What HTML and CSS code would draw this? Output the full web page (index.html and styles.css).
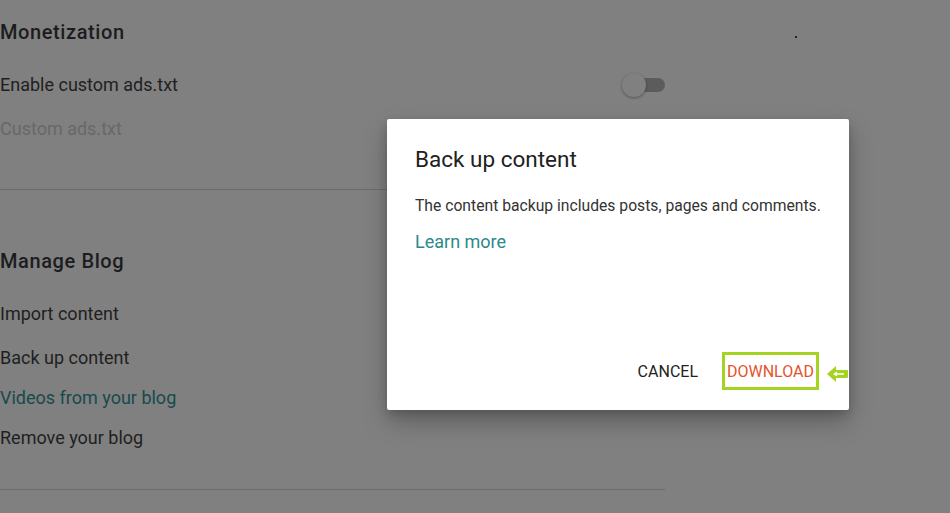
FILE: index.html
```html
<!DOCTYPE html>
<html lang="en">
<head>
    <meta charset="UTF-8">
    <meta name="viewport" content="width=device-width, initial-scale=1.0">
    <title>Settings - Back up content</title>
    <link rel="stylesheet" href="styles.css">
</head>
<body>
    <div class="settings">
        <section class="section section-monetization">
            <h2 class="section-title">Monetization</h2>
            <div class="row">
                <span>Enable custom ads.txt</span>
                <span class="toggle"><span class="toggle-knob"></span></span>
            </div>
            <div class="row row-disabled">Custom ads.txt</div>
        </section>

        <section class="section section-manage">
            <h2 class="section-title">Manage Blog</h2>
            <div class="row row-first">Import content</div>
            <div class="row row-tight">Back up content</div>
            <div class="row row-tight row-link">Videos from your blog</div>
            <div class="row row-tight">Remove your blog</div>
        </section>
    </div>

    <span class="stray-dot"></span>

    <!-- dialog on top of the dimmed settings page -->
    <div class="dialog">
        <h3 class="dialog-title">Back up content</h3>
        <p class="dialog-text">The content backup includes posts, pages and comments.</p>
        <a href="#" class="dialog-link">Learn more</a>
        <div class="dialog-actions">
            <button class="btn btn-cancel">Cancel</button>
            <button class="btn btn-download">Download</button>
            <svg class="pointer" width="24" height="18" viewBox="0 0 24 18">
                <path d="M2 9 L11 1 L11 5 L22 5 Q23 5 23 6 L23 12 Q23 13 22 13 L11 13 L11 17 Z" fill="#a4d322"/>
                <path d="M8 9 L12 6.5 L12 8.3 L19 8.3 L19 9.7 L12 9.7 L12 11.5 Z" fill="#ffffff"/>
            </svg>
        </div>
    </div>
</body>
</html>
```

FILE: styles.css
```css
body {
    margin: 0;
    padding: 0;
    background: #808080;
    font-family: Roboto, 'Liberation Sans', sans-serif;
    color: #1f1f1f;
    min-height: 513px;
    overflow: hidden;
}

.settings {
    width: 665px;
}

.section {
    border-bottom: 1px solid #6c6c6c;
}

.section-monetization {
    padding-top: 20px;
    height: 169px;
}

.section-manage {
    padding-top: 59px;
    height: 240px;
}

.section-title {
    margin: 0 0 29px;
    font-size: 20px;
    font-weight: 500;
    letter-spacing: 0.6px;
    line-height: 24px;
    color: #1c1c20;
}

.row {
    display: flex;
    align-items: center;
    justify-content: space-between;
    height: 24px;
    margin-bottom: 20px;
    font-size: 18px;
    line-height: 24px;
}

.row-first {
    margin-bottom: 20px;
}

.row-tight {
    margin-bottom: 16px;
}

.row-disabled {
    color: #686868;
}

.row-link {
    color: #174a4c;
}

.toggle {
    position: relative;
    width: 43px;
    height: 24px;
    display: flex;
    align-items: center;
    justify-content: flex-end;
}

.toggle::before {
    content: "";
    width: 26px;
    height: 14px;
    border-radius: 7px;
    background: #5c5c5c;
}

.toggle-knob {
    position: absolute;
    left: 0;
    top: 0;
    width: 24px;
    height: 24px;
    border-radius: 50%;
    background: #808080;
    box-shadow: 0 1px 3px rgba(0, 0, 0, 0.35);
}

.stray-dot {
    position: absolute;
    left: 795px;
    top: 36px;
    width: 2px;
    height: 2px;
    background: #222;
}

.dialog {
    position: absolute;
    left: 387px;
    top: 119px;
    width: 462px;
    height: 291px;
    box-sizing: border-box;
    padding: 26px 28px 0;
    background: #ffffff;
    border-radius: 2px;
    box-shadow: 0 12px 24px rgba(0, 0, 0, 0.25), 0 4px 10px rgba(0, 0, 0, 0.15);
    display: flex;
    flex-direction: column;
}

.dialog-title {
    margin: 0 0 23px;
    font-size: 22.5px;
    font-weight: 400;
    line-height: 28px;
    color: #212121;
}

.dialog-text {
    margin: 0 0 15px;
    font-size: 15.7px;
    line-height: 20px;
    color: #333333;
}

.dialog-link {
    font-size: 18px;
    line-height: 22px;
    color: #2a8a8c;
    text-decoration: none;
    align-self: flex-start;
}

.dialog-actions {
    margin-top: auto;
    margin-bottom: 20px;
    display: flex;
    align-items: center;
    justify-content: flex-end;
    margin-right: -28px;
}

.btn {
    font-family: Roboto, 'Liberation Sans', sans-serif;
    font-size: 16px;
    font-weight: 400;
    text-transform: uppercase;
    background: none;
    border: none;
    padding: 0;
    cursor: pointer;
}

.btn-cancel {
    color: #222222;
    margin-right: 24px;
}

.btn-download {
    color: #e5532b;
    width: 97px;
    height: 38px;
    box-sizing: border-box;
    border: 3px solid #a4d322;
}

.pointer {
    margin-left: 6px;
    margin-top: 6px;
}
```
